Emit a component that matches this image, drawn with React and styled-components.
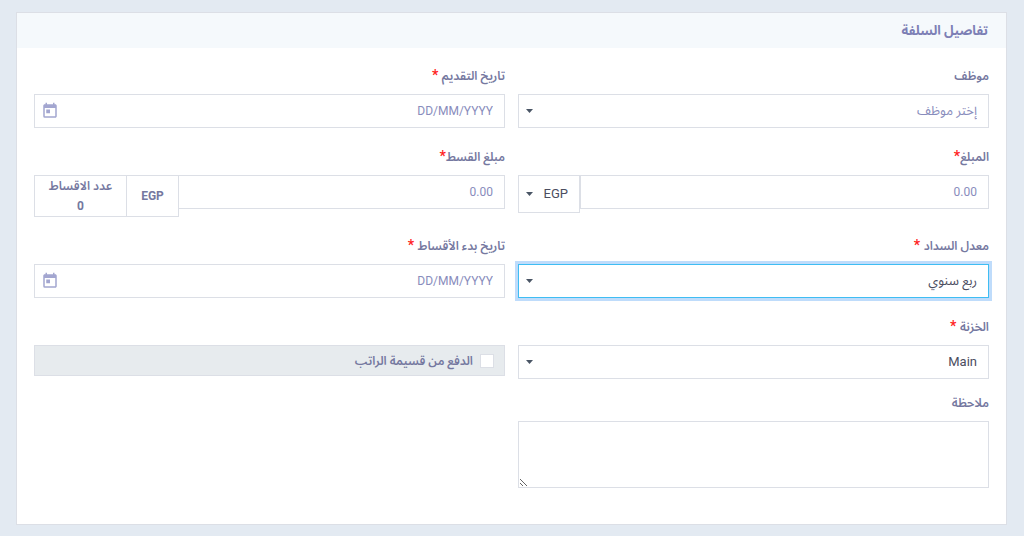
import React, { useState } from 'react';
import styled, { createGlobalStyle, ThemeProvider } from 'styled-components';
import { MdToday } from 'react-icons/md';

const theme = {
  page: '#e3eaf2',
  card: '#ffffff',
  header: '#f5f9fc',
  border: '#dcdfe6',
  muted: '#e7ebee',
  label: '#7578a0',
  title: '#7c7fb5',
  placeholder: '#888cbc',
  text: '#4b4d60',
  icon: '#a3a6d0',
  arrow: '#4a5565',
  required: '#ff1f1f',
  focus: '#3fbdf3',
  focusRing: '#bfdcfb',
};

const GlobalStyle = createGlobalStyle`
  * {
    box-sizing: border-box;
  }

  body {
    margin: 0;
    background-color: ${theme.page};
  }

  body, input, select, textarea {
    font-family: Roboto, 'Noto Sans Arabic', 'DejaVu Sans', sans-serif;
    font-size: 12px;
  }
`;

const Page = styled.main`
  padding: 12px 17px 12px 16px;
`;

const Card = styled.section`
  background-color: ${({ theme }) => theme.card};
  border: 1px solid ${({ theme }) => theme.border};
`;

const CardHeader = styled.header`
  padding: 6px 18px;
  background-color: ${({ theme }) => theme.header};
`;

const CardTitle = styled.h1`
  margin: 0;
  font-size: 13px;
  font-weight: 700;
  line-height: 23px;
  color: ${({ theme }) => theme.title};
`;

const Form = styled.form`
  padding: 18px 17px 36px;
`;

const Row = styled.div`
  display: grid;
  grid-template-columns: 1fr 1fr;
  align-items: start;
  gap: 13px;
  margin-bottom: ${({ $tight }) => ($tight ? '14px' : '19px')};

  &:last-child {
    margin-bottom: 0;
  }
`;

const Field = styled.div`
  min-width: 0;
`;

const Label = styled.label`
  display: block;
  width: fit-content;
  height: 20px;
  margin-bottom: 8px;
  font-weight: 600;
  line-height: 20px;
  color: ${({ theme }) => theme.label};
`;

const Required = styled.span`
  font-size: 14px;
  font-weight: 700;
  line-height: 1;
  color: ${({ theme }) => theme.required};
`;

const Control = styled.div`
  position: relative;
  flex: ${({ $width }) => ($width ? `0 0 ${$width}` : '1')};
`;

const TextInput = styled.input`
  display: block;
  flex: 1;
  width: 100%;
  min-width: 0;
  height: 34px;
  padding: 0 11px;
  border: 1px solid ${({ theme }) => theme.border};
  border-radius: 0;
  outline: none;
  background-color: ${({ theme }) => theme.card};
  color: ${({ theme }) => theme.text};

  &::placeholder {
    color: ${({ theme }) => theme.placeholder};
    opacity: 1;
  }

  &:focus {
    border-color: ${({ theme }) => theme.focus};
    box-shadow: 0 0 0 3px ${({ theme }) => theme.focusRing};
  }
`;

const SelectInput = styled(TextInput).attrs({ as: 'select' })`
  appearance: none;
  height: ${({ $tall }) => ($tall ? '38px' : '34px')};
  padding-left: 18px;
  font-size: 13px;
  line-height: 26px;
  color: ${({ theme, $empty }) => ($empty ? theme.placeholder : theme.text)};
`;

const Arrow = styled.svg`
  position: absolute;
  top: 50%;
  left: 8px;
  width: 7px;
  height: 4px;
  margin-top: -2px;
  fill: ${({ theme }) => theme.arrow};
  pointer-events: none;
`;

const CalendarIcon = styled(MdToday)`
  position: absolute;
  top: 8px;
  left: 7px;
  width: 18px;
  height: 18px;
  color: ${({ theme }) => theme.icon};
  pointer-events: none;
`;

const InputGroup = styled.div`
  display: flex;
  align-items: flex-start;
`;

const Addon = styled.div`
  flex: 0 0 ${({ $width }) => $width};
  display: flex;
  flex-direction: column;
  align-items: center;
  justify-content: center;
  height: 42px;
  margin-right: -1px;
  border: 1px solid ${({ theme }) => theme.border};
  font-weight: 700;
  line-height: 20px;
  color: ${({ theme }) => theme.label};
`;

const AddonText = styled.span`
  height: 20px;
  font-weight: 600;
`;

const CheckLabel = styled.label`
  display: flex;
  align-items: center;
  gap: 7px;
  height: 31px;
  margin-top: 28px;
  padding: 0 10px;
  border: 1px solid ${({ theme }) => theme.border};
  background-color: ${({ theme }) => theme.muted};
  font-weight: 600;
  line-height: 20px;
  color: ${({ theme }) => theme.label};
`;

const Checkbox = styled.input`
  appearance: none;
  width: 14px;
  height: 14px;
  margin: 0;
  border: 1px solid ${({ theme }) => theme.border};
  background-color: ${({ theme }) => theme.card};

  &:checked {
    background-color: ${({ theme }) => theme.focus};
  }
`;

const TextArea = styled(TextInput).attrs({ as: 'textarea' })`
  height: 67px;
  padding: 8px 11px;
  resize: both;
`;

const FieldLabel = ({ id, required, spaced, children }) => (
  <Label htmlFor={id}>
    {children}
    {required && <Required>{spaced ? ' *' : '*'}</Required>}
  </Label>
);

const Select = ({ width, options, ...props }) => (
  <Control $width={width}>
    <SelectInput {...props}>
      {options.map((option) => (
        <option key={option}>{option}</option>
      ))}
    </SelectInput>
    <Arrow viewBox="0 0 7 4">
      <path d="M0 0h7L3.5 4z" />
    </Arrow>
  </Control>
);

const DateInput = ({ id }) => (
  <Control>
    <TextInput id={id} type="text" placeholder="DD/MM/YYYY" />
    <CalendarIcon />
  </Control>
);

const App = () => {
  const [fromPayslip, setFromPayslip] = useState(false);

  return (
    <ThemeProvider theme={theme}>
      <GlobalStyle />
      <Page dir="rtl" lang="ar">
        <Card>
          <CardHeader>
            <CardTitle>تفاصيل السلفة</CardTitle>
          </CardHeader>
          <Form>
            <Row>
              <Field>
                <FieldLabel id="employee">موظف</FieldLabel>
                <Select id="employee" $empty options={['إختر موظف']} />
              </Field>
              <Field>
                <FieldLabel id="apply-date" required spaced>تاريخ التقديم</FieldLabel>
                <DateInput id="apply-date" />
              </Field>
            </Row>

            <Row>
              <Field>
                <FieldLabel id="amount" required>المبلغ</FieldLabel>
                <InputGroup>
                  <TextInput id="amount" type="text" placeholder="0.00" />
                  <Select width="62px" aria-label="العملة" $tall options={['EGP']} />
                </InputGroup>
              </Field>
              <Field>
                <FieldLabel id="installment" required>مبلغ القسط</FieldLabel>
                <InputGroup>
                  <TextInput id="installment" type="text" placeholder="0.00" />
                  <Addon $width="53px">EGP</Addon>
                  <Addon $width="93px">
                    <AddonText>عدد الاقساط</AddonText>
                    0
                  </Addon>
                </InputGroup>
              </Field>
            </Row>

            <Row>
              <Field>
                <FieldLabel id="rate" required spaced>معدل السداد</FieldLabel>
                <Select id="rate" autoFocus options={['ربع سنوي']} />
              </Field>
              <Field>
                <FieldLabel id="start-date" required spaced>تاريخ بدء الأقساط</FieldLabel>
                <DateInput id="start-date" />
              </Field>
            </Row>

            <Row $tight>
              <Field>
                <FieldLabel id="treasury" required spaced>الخزنة</FieldLabel>
                <Select id="treasury" options={['Main']} />
              </Field>
              <Field>
                <CheckLabel>
                  <Checkbox
                    type="checkbox"
                    checked={fromPayslip}
                    onChange={(e) => setFromPayslip(e.target.checked)}
                  />
                  الدفع من قسيمة الراتب
                </CheckLabel>
              </Field>
            </Row>

            <Row>
              <Field>
                <FieldLabel id="note">ملاحظة</FieldLabel>
                <TextArea id="note" />
              </Field>
            </Row>
          </Form>
        </Card>
      </Page>
    </ThemeProvider>
  );
};

export default App;
